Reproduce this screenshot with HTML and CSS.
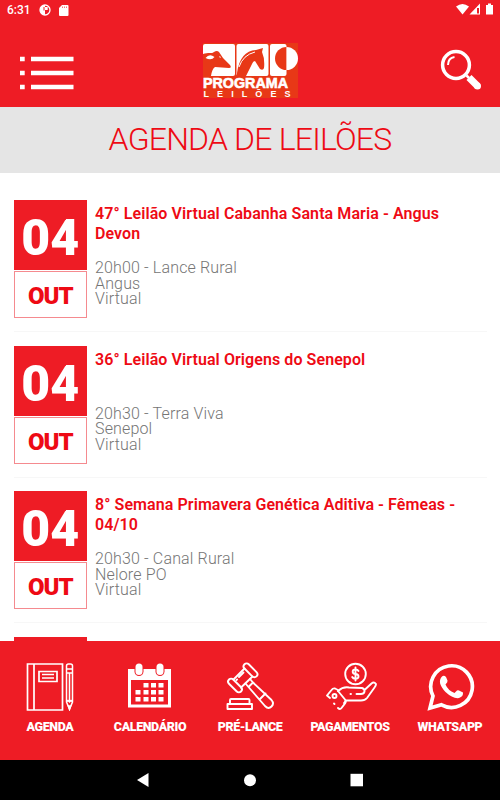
FILE: index.html
```html
<!DOCTYPE html>
<html lang="pt-BR">
<head>
  <meta charset="UTF-8">
  <meta name="viewport" content="width=device-width, initial-scale=1.0">
  <title>Agenda de Leilões</title>
  <link rel="stylesheet" href="styles.css">
</head>
<body>
  <div class="status">
    <span class="hora">6:31</span>
    <svg class="status-app" width="12" height="12" viewBox="0 0 12 12">
      <circle cx="6" cy="6" r="5" fill="none" stroke="#fff" stroke-width="1.3"/>
      <path d="M6 1a5 5 0 0 0 0 10z" fill="#fff"/>
      <path d="M6 3h2.700v3H6z" fill="#fff"/>
      <path d="M4.500 3h1v3.500h-1z" fill="#ee1c25"/>
    </svg>
    <svg class="status-sd" width="10" height="11" viewBox="0 0 10 11">
      <path d="M3 0h5.500Q9.500 0 9.500 1v9q0 1-1 1H1q-1 0-1-1V3z" fill="#fff"/>
      <path d="M3.500 1.500v1.500M5.500 1.500v1.500M7.500 1.500v1.500" stroke="#ee1c25" stroke-width=".6"/>
    </svg>
    <svg class="status-sinal" width="38" height="13" viewBox="0 0 38 13">
      <path d="M0 3.500Q6.500-1.500 13 3.500L6.500 11.500z" fill="#fff"/>
      <path d="M24 .500V11.500H13.500z" fill="#fff"/>
      <path d="M21 5h2v5.500h-2z" fill="#ee1c25"/>
      <path d="M30 2h2V.500h3V2h2v9.500h-7z" fill="#fff"/>
    </svg>
  </div>

  <header class="topo">
    <svg class="menu" width="54" height="34" viewBox="0 0 54 34">
      <path d="M0 .8h4.700v4.500H0zM11 .8h42.500v4.500H11zM0 14.800h4.700v4.500H0zM11 14.800h42.500v4.500H11zM0 28.800h4.700v4.500H0zM11 28.800h42.500v4.500H11z" fill="#fff"/>
    </svg>

    <svg class="logo" width="96" height="56" viewBox="0 0 96 56">
      <rect width="95" height="55" fill="#e83817"/>
      <rect x="0" y="1" width="32" height="32" rx="2" fill="#fff"/>
      <rect x="33.500" y="1" width="32" height="32" rx="2" fill="#fff"/>
      <rect x="67" y="1" width="16.500" height="32" rx="2" fill="#fff"/>
      <!-- boi -->
      <path d="M0 11C5 9 9 11 11 9Q14 7 16 9L20 15L27 22Q29 25 26 25L12 24Q9 26 8 33H0z" fill="#e83817"/>
      <path d="M2.500 15q4-5 9-1q-3 4-9 1zM16 13l2 1-1 1z" fill="#fff"/>
      <!-- cavalo -->
      <path d="M34 30Q37 8 53 7L60 5L59 9Q62 16 61 25Q60 28 57 26L52 18Q50 18 49 21L43 33H34z" fill="#e83817"/>
      <path d="M36 24Q40 12 52 9" stroke="#fff" stroke-width="1" fill="none"/>
      <!-- letra P em duas metades -->
      <path d="M83.500 4a11.500 11.500 0 0 0 0 23z" fill="#e83817"/>
      <path d="M83.500 4a11.500 11.500 0 0 1 0 23z" fill="#fff"/>
      <text x="0" y="44.800" textLength="85" lengthAdjust="spacingAndGlyphs" class="logo-nome">PROGRAMA</text>
      <text x=".5" y="54" textLength="87" class="logo-sub">LEILÕES</text>
    </svg>

    <svg class="busca" width="43" height="43" viewBox="0 0 43 43">
      <circle cx="16" cy="16" r="13.400" fill="none" stroke="#fff" stroke-width="3.500"/>
      <path d="M8 16Q8 9 14.500 8" fill="none" stroke="#fff" stroke-width="2"/>
      <path d="M26.500 26.500l2.500 2.500" stroke="#fff" stroke-width="2.500"/>
      <path d="M29 28.500L37.500 37" stroke="#fff" stroke-width="7"/>
      <circle cx="37.500" cy="37" r="3.500" fill="#fff"/>
    </svg>
  </header>

  <h1 class="titulo">AGENDA DE LEILÕES</h1>

  <main class="lista">
    <article class="leilao">
      <div class="data">
        <div class="dia">04</div>
        <div class="mes">OUT</div>
      </div>
      <div class="info">
        <h2 class="nome">47° Leilão Virtual Cabanha Santa Maria - Angus<br>Devon</h2>
        <p class="detalhes">20h00 - Lance Rural<br>Angus<br>Virtual</p>
      </div>
    </article>
    <article class="leilao">
      <div class="data">
        <div class="dia">04</div>
        <div class="mes">OUT</div>
      </div>
      <div class="info">
        <h2 class="nome">36° Leilão Virtual Origens do Senepol</h2>
        <p class="detalhes">20h30 - Terra Viva<br>Senepol<br>Virtual</p>
      </div>
    </article>
    <article class="leilao">
      <div class="data">
        <div class="dia">04</div>
        <div class="mes">OUT</div>
      </div>
      <div class="info">
        <h2 class="nome">8° Semana Primavera Genética Aditiva - Fêmeas -<br>04/10</h2>
        <p class="detalhes">20h30 - Canal Rural<br>Nelore PO<br>Virtual</p>
      </div>
    </article>
    <article class="leilao">
      <div class="data">
        <div class="dia"></div>
      </div>
    </article>
  </main>

  <nav class="rodape">
    <a class="item agenda">
      <svg width="50" height="50" viewBox="0 0 50 50" fill="none" stroke="#fff" stroke-width="1.700">
        <path d="M2.500 3h35v46h-35zM9 3v46"/>
        <path d="M14 10.500h18v10H14z"/>
        <path d="M17 13.500h12M17 17h12" stroke-width="1.400"/>
        <path d="M41.500 41V5q0-2 2-2h2q2 0 2 2v36l-3 7zM41.500 8h6M41.500 12h6M44.500 12v28M41.500 41l1.500-1.500 1.500 1.500 1.500-1.500 1.500 1.500" stroke-width="1.500"/>
        <path d="M43.500 45h2l-1 3z" fill="#fff"/>
      </svg>
      <span>AGENDA</span>
    </a>
    <a class="item calendario">
      <svg width="50" height="50" viewBox="0 0 50 50">
        <path d="M3 8h43v38.500H3z" fill="#fff"/>
        <path d="M6 19h37v24.500H6z" fill="#ee1c25"/>
        <rect x="9.500" y="1.500" width="9" height="13.500" rx="4.500" fill="#ee1c25"/>
        <rect x="30.500" y="1.500" width="9" height="13.500" rx="4.500" fill="#ee1c25"/>
        <rect x="10.500" y="2.500" width="7" height="11.500" rx="3.500" fill="#fff"/>
        <rect x="31.500" y="2.500" width="7" height="11.500" rx="3.500" fill="#fff"/>
        <path d="M18.500 22h5v4.500h-5zM26 22h5v4.500h-5zM33.500 22h5v4.500h-5zM10.500 29h5v4.500h-5zM18.500 29h5v4.500h-5zM26 29h5v4.500h-5zM33.500 29h5v4.500h-5zM10.500 36h5v4.500h-5zM18.500 36h5v4.500h-5zM26 36h5v4.500h-5zM33.500 36h5v4.500h-5z" fill="#fff"/>
      </svg>
      <span>CALENDÁRIO</span>
    </a>
    <a class="item prelance">
      <svg width="50" height="50" viewBox="0 0 50 50" fill="none" stroke="#fff" stroke-width="1.900" stroke-linejoin="round" stroke-linecap="round">
        <rect x="-3" y="-8.500" width="6" height="17" rx="3" transform="translate(25.500 9.300) rotate(-45)"/>
        <rect x="-3" y="-8.500" width="6" height="17" rx="3" transform="translate(10 24.500) rotate(-45)"/>
        <path d="M19.500 7.500L8.500 18.500M27.500 15.500L16 26.500M11.500 19l.6-.6M14 16l4.500-4.500"/>
        <path d="M20.500 22.500l3 3.500 4.500-4.500-3-3.500M23.500 26L40 45q3.500 3.500 6.500.5t0-6.500L28 21.500M34.500 38.500l6-6"/>
        <path d="M2.500 48v-5h24.500v5zM5 43v-4q0-1 1-1h17.500q1 0 1 1v4"/>
      </svg>
      <span>PRÉ-LANCE</span>
    </a>
    <a class="item pagamentos">
      <svg width="54" height="50" viewBox="0 0 54 50" fill="none" stroke="#fff" stroke-width="1.900" stroke-linejoin="round" stroke-linecap="round">
        <circle cx="32.500" cy="13" r="10.300"/>
        <path d="M35.500 10Q34.700 8.500 32.500 8.500Q29.700 8.500 29.700 10.700Q29.700 12.700 32.500 13Q35.500 13.300 35.500 15.500Q35.500 17.700 32.500 17.700Q30 17.700 29.200 16M32.500 6.500v13"/>
        <path d="M15 30Q20 25.500 26 26.500L39 27Q42 28 41.500 30.500Q41 33 38 33H33.500M27.500 33h.5M41.500 29L48.500 22.500Q51 20.500 53 23Q53 24.500 51.500 26.500L44 37Q42 39.500 38 39.500H23L21 42"/>
        <path d="M15 29l-3-1.500Q10 27 8.500 29L4 34.500l3 2.500M15 30l7 8.500q1.500 2 0 4l-3.500 4.500q-1.500 2-3.500 0M11 42.500l.5.500"/>
        <circle cx="11.500" cy="35" r="2"/>
      </svg>
      <span>PAGAMENTOS</span>
    </a>
    <a class="item whatsapp">
      <svg width="50" height="50" viewBox="0 0 50 50">
        <path d="M5 47L8 35A20.800 20.800 0 1 1 16.500 43.800z" fill="none" stroke="#fff" stroke-width="3.700"/>
        <path d="M17 15.500Q19 14 21 16L22.500 19.500Q23 21 20.500 23.500Q23 29.500 29.500 32L32 29.500Q33 29 34 29.500L38 31.500Q38.500 35.500 34 37Q28 38 20.500 31Q11.500 21.500 17 15.500z" fill="#fff"/>
      </svg>
      <span>WHATSAPP</span>
    </a>
  </nav>

  <div class="android">
    <svg width="14" height="14" viewBox="0 0 14 14"><path d="M1 7l11.500-7v14z" fill="#fff"/></svg>
    <svg width="14" height="14" viewBox="0 0 14 14"><circle cx="7" cy="7.300" r="6" fill="#fff"/></svg>
    <svg width="14" height="14" viewBox="0 0 14 14"><path d="M.5.800h12.500v12.500H.5z" fill="#fff"/></svg>
  </div>
</body>
</html>
```
FILE: styles.css
```css
* {
  box-sizing: border-box;
  margin: 0;
  padding: 0;
}

body {
  width: 500px;
  height: 800px;
  display: flex;
  flex-direction: column;
  overflow: hidden;
  background: #fff;
  font-family: Roboto, "Open Sans", sans-serif;
}

svg {
  display: block;
  flex: none;
}

/* barra de status */
.status {
  height: 20px;
  display: flex;
  align-items: center;
  padding: 0 6px 0 7px;
  background: #ee1c25;
  color: #fff;
}

.hora {
  width: 32px;
  font-size: 12px;
  font-weight: 500;
}

.status-sd {
  margin-left: 8px;
}

.status-sinal {
  margin-left: auto;
  margin-bottom: 1px;
}

/* topo */
.topo {
  height: 87px;
  display: flex;
  padding: 23px 17px 0 20px;
  background: #ee1c25;
}

.menu {
  margin-top: 13px;
}

.logo {
  margin-left: 129px;
}

.logo-nome {
  font: bold 14.5px "Liberation Sans", sans-serif;
  fill: #fff;
  stroke: #fff;
  stroke-width: 0.6px;
}

.logo-sub {
  font: bold 9px "Liberation Sans", sans-serif;
  fill: #fff;
}

.busca {
  margin-top: 6px;
  margin-left: auto;
}

.titulo {
  height: 66px;
  flex: none;
  background: #e5e5e5;
  color: #ee0a14;
  font-size: 32px;
  font-weight: 300;
  line-height: 65px;
  text-align: center;
  letter-spacing: -0.8px;
}

/* lista de leiloes */
.lista {
  flex: 1;
  min-height: 0;
  overflow: hidden;
  padding: 13.5px 13px 0 13.5px;
}

.leilao {
  height: 145.6px;
  display: flex;
  gap: 8px;
  padding-top: 13.5px;
  border-bottom: 1px solid #f7f7f7;
}

.data {
  width: 73.5px;
  height: 118px;
  flex: none;
  text-align: center;
  font-weight: 900;
}

.dia {
  height: 70px;
  background: #ee1c25;
  color: #fff;
  font-size: 50px;
  line-height: 76px;
}

.mes {
  height: 47px;
  margin-top: 1px;
  border: 1px solid #f58a8f;
  color: #ee0a14;
  font-size: 24px;
  line-height: 49px;
  letter-spacing: -1px;
}

.info {
  padding-top: 4px;
}

.nome {
  height: 56px;
  color: #ee0a14;
  font-size: 16px;
  font-weight: 600;
  line-height: 20px;
  letter-spacing: 0.08px;
  white-space: nowrap;
}

.detalhes {
  color: #757575;
  font-size: 16px;
  font-weight: 300;
  line-height: 15.6px;
  letter-spacing: 0.15px;
}

/* menu inferior */
.rodape {
  height: 119px;
  display: grid;
  grid-template-columns: repeat(5, 1fr);
  background: #ee1c25;
}

.item {
  display: flex;
  flex-direction: column;
  align-items: center;
  padding-top: 20px;
  color: #fff;
  font-size: 12.5px;
  font-weight: 900;
  line-height: 14px;
  letter-spacing: -0.4px;
  white-space: nowrap;
}

.item span {
  margin-top: 9px;
}

.android {
  height: 40px;
  display: flex;
  justify-content: center;
  align-items: center;
  gap: 93px;
  background: #000;
}
```
